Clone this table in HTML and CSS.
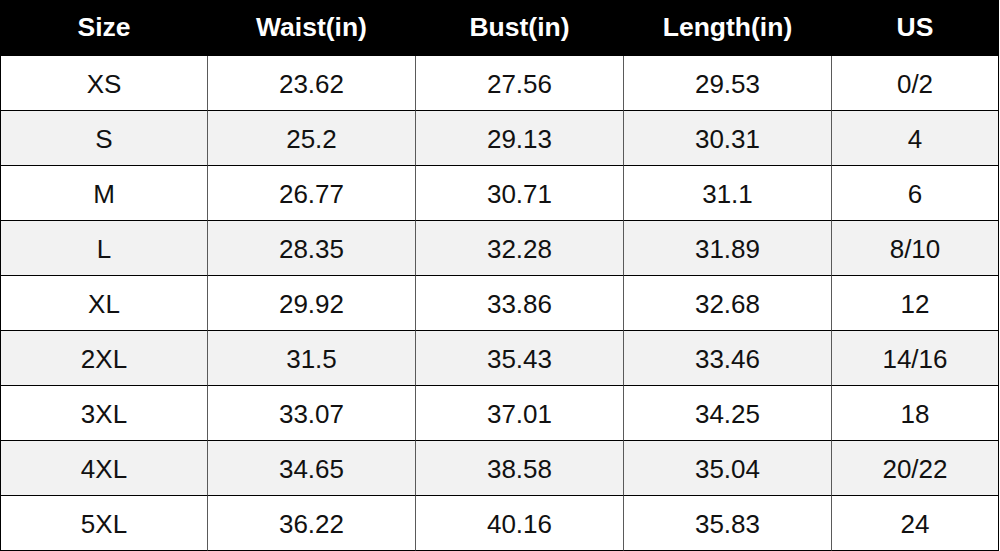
FILE: index.html
```html
<!DOCTYPE html>
<html>
<head>
<meta charset="utf-8">
<link rel="stylesheet" href="styles.css">
</head>
<body>
<div class="table">
  <div class="row head"><div class="c">Size</div><div class="c">Waist(in)</div><div class="c">Bust(in)</div><div class="c">Length(in)</div><div class="c">US</div></div>
  <div class="row"><div class="c">XS</div><div class="c">23.62</div><div class="c">27.56</div><div class="c">29.53</div><div class="c">0/2</div></div>
  <div class="row alt"><div class="c">S</div><div class="c">25.2</div><div class="c">29.13</div><div class="c">30.31</div><div class="c">4</div></div>
  <div class="row"><div class="c">M</div><div class="c">26.77</div><div class="c">30.71</div><div class="c">31.1</div><div class="c">6</div></div>
  <div class="row alt"><div class="c">L</div><div class="c">28.35</div><div class="c">32.28</div><div class="c">31.89</div><div class="c">8/10</div></div>
  <div class="row"><div class="c">XL</div><div class="c">29.92</div><div class="c">33.86</div><div class="c">32.68</div><div class="c">12</div></div>
  <div class="row alt"><div class="c">2XL</div><div class="c">31.5</div><div class="c">35.43</div><div class="c">33.46</div><div class="c">14/16</div></div>
  <div class="row"><div class="c">3XL</div><div class="c">33.07</div><div class="c">37.01</div><div class="c">34.25</div><div class="c">18</div></div>
  <div class="row alt"><div class="c">4XL</div><div class="c">34.65</div><div class="c">38.58</div><div class="c">35.04</div><div class="c">20/22</div></div>
  <div class="row"><div class="c">5XL</div><div class="c">36.22</div><div class="c">40.16</div><div class="c">35.83</div><div class="c">24</div></div>
</div>
</body>
</html>
```
FILE: styles.css
```css
html, body {
  margin: 0;
  padding: 0;
  background: #fff;
}
.table {
  width: 999px;
  font-family: "Liberation Sans", Arial, sans-serif;
  color: #111;
}
.row {
  display: grid;
  grid-template-columns: 208px 208px 208px 208px 167px;
  background: #fff;
}
.row.alt {
  background: #f2f2f2;
}
.c {
  box-sizing: border-box;
  height: 55px;
  display: flex;
  align-items: center;
  justify-content: center;
  font-size: 26px;
  border-bottom: 1px solid #000;
  border-right: 1px solid #5a5a5a;
  padding-top: 2px;
}
.c:first-child {
  border-left: 1px solid #000;
}
.c:last-child {
  border-right: 1px solid #000;
}
.head {
  background: #000;
}
.head .c {
  height: 56px;
  color: #fff;
  font-weight: bold;
  font-size: 26.5px;
  border-color: #000;
  padding-top: 0;
}
```
